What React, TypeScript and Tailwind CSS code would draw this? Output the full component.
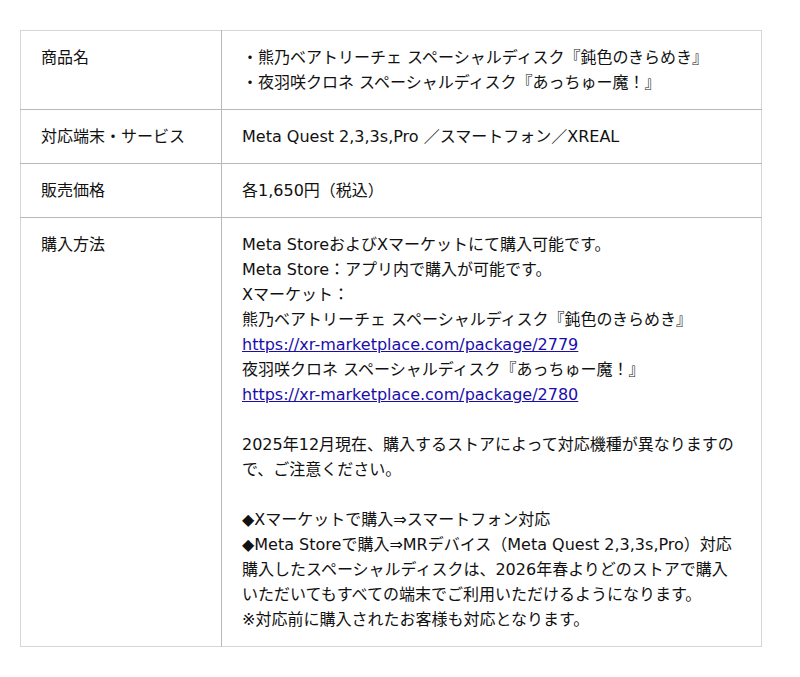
const rows: { label: string; lines: React.ReactNode[] }[] = [
  {
    label: "商品名",
    lines: [
      "・熊乃ベアトリーチェ スペーシャルディスク『鈍色のきらめき』",
      "・夜羽咲クロネ スペーシャルディスク『あっちゅー魔！』",
    ],
  },
  {
    label: "対応端末・サービス",
    lines: ["Meta Quest 2,3,3s,Pro ／スマートフォン／XREAL"],
  },
  { label: "販売価格", lines: ["各1,650円（税込）"] },
];

function Link({ href }: { href: string }) {
  return (
    <a href={href} className="text-[#1a0dab] underline">
      {href}
    </a>
  );
}

export default function App() {
  return (
    <div
      className="bg-white px-5 pt-[30px] pb-[30px] text-[16px] leading-[25px] text-[#111]"
      style={{ fontFamily: '"DejaVu Sans", "Noto Sans CJK JP", sans-serif' }}
    >
      <table className="w-[742px] border-collapse border border-[#d6d6d6]">
        <tbody>
          {rows.map((r) => (
            <tr key={r.label} className="border-b border-[#b8b8b8]">
              <td className="w-[201px] border-r border-[#b8b8b8] px-5 py-[14px] align-top">
                {r.label}
              </td>
              <td className="px-5 py-[14px] align-top">
                {r.lines.map((l, i) => (
                  <div key={i}>{l}</div>
                ))}
              </td>
            </tr>
          ))}
          <tr>
            <td className="w-[201px] border-r border-[#b8b8b8] px-5 py-[14px] align-top">
              購入方法
            </td>
            <td className="px-5 py-[14px] align-top">
              <div>Meta StoreおよびXマーケットにて購入可能です。</div>
              <div>Meta Store：アプリ内で購入が可能です。</div>
              <div>Xマーケット：</div>
              <div>熊乃ベアトリーチェ スペーシャルディスク『鈍色のきらめき』</div>
              <div>
                <Link href="https://xr-marketplace.com/package/2779" />
              </div>
              <div>夜羽咲クロネ スペーシャルディスク『あっちゅー魔！』</div>
              <div>
                <Link href="https://xr-marketplace.com/package/2780" />
              </div>
              <div className="h-[25px]" />
              <div>
                2025年12月現在、購入するストアによって対応機種が異なりますので、ご注意ください。
              </div>
              <div className="h-[25px]" />
              <div>◆Xマーケットで購入⇒スマートフォン対応</div>
              <div>◆Meta Storeで購入⇒MRデバイス（Meta Quest 2,3,3s,Pro）対応</div>
              <div>
                購入したスペーシャルディスクは、2026年春よりどのストアで購入いただいてもすべての端末でご利用いただけるようになります。
              </div>
              <div>※対応前に購入されたお客様も対応となります。</div>
            </td>
          </tr>
        </tbody>
      </table>
    </div>
  );
}
